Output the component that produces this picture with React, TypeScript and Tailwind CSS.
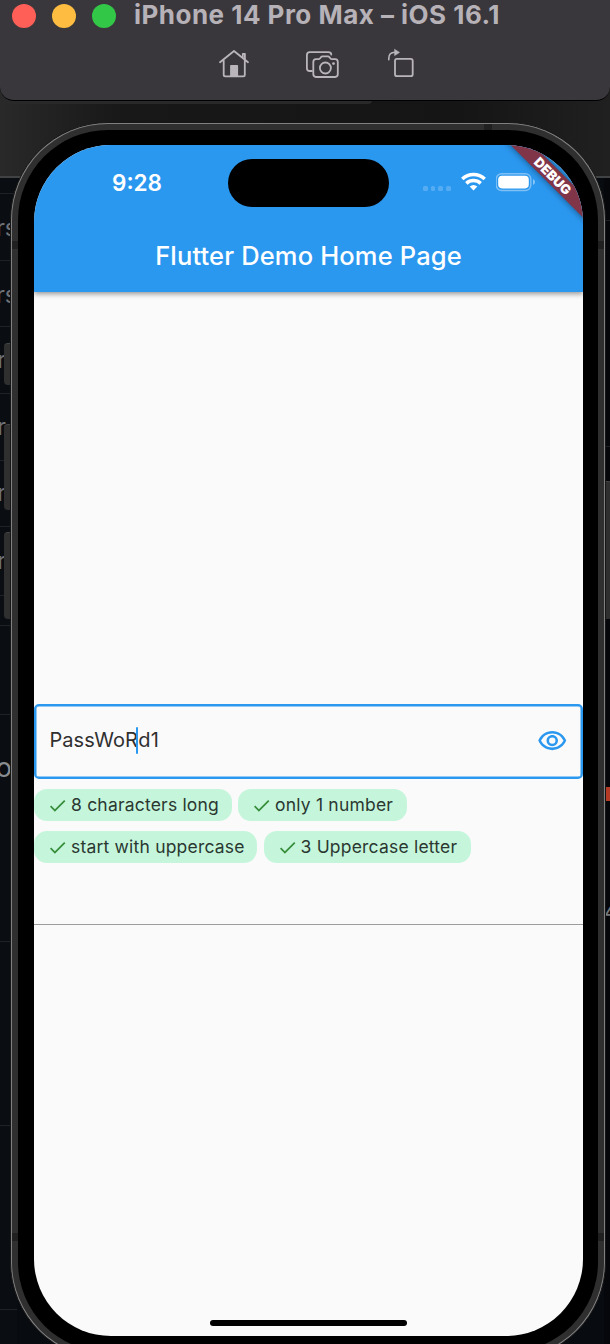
import type { ReactNode } from "react";
import { MdCheck, MdOutlineVisibility } from "react-icons/md";

function TitleBar() {
  return (
    <header className="relative h-[101px] w-full rounded-b-[14px] border-b border-black bg-[#3a373c]">
      <div className="flex h-8 items-center pl-3">
        <div className="flex gap-4">
          <span className="size-6 rounded-full bg-[#ff5f57]" />
          <span className="size-6 rounded-full bg-[#febc40]" />
          <span className="size-6 rounded-full bg-[#33c748]" />
        </div>
        <h1 className="-mt-[2px] ml-[18px] whitespace-nowrap text-[26px] font-bold leading-8 tracking-[0.48px] text-[#b6b2b8]">iPhone 14 Pro Max – iOS 16.1</h1>
      </div>
      <div className="flex pl-[218px] pt-4">
        <svg className="h-8 w-8" viewBox="218 48 32 32" fill="none" stroke="#b9b5bb" strokeWidth="1.8" strokeLinejoin="round" strokeLinecap="round">
          <path d="M220 62.3 234 51l14 11.3M223.7 60.5v14.2q0 1.6 1.6 1.6h17.9q1.6 0 1.6-1.6V60.5" />
          <path d="M242.8 57v-3.2h2.1V59" />
          <path d="M231 65.8h6.2v10h-6.2z" fill="#b9b5bb" />
        </svg>
        <svg className="ml-[54px] h-8 w-9" viewBox="304 48 36 32" fill="none" stroke="#b9b5bb" strokeWidth="1.8" strokeLinejoin="round" strokeLinecap="round">
          <path d="M312 71h-2.3q-2.8 0-2.8-2.8V55q0-2.9 2.9-2.9h18.6q2.7 0 2.9 2.5" />
          <path d="M316 59.2h2.6q.8 0 1.3-.7l1-1.3q.6-.8 1.6-.8h5.4q1 0 1.6.8l1 1.3q.5.7 1.3.7h3.4q2.6 0 2.6 2.9v12q0 2.9-2.6 2.9H316q-2.7 0-2.7-2.9v-12q0-2.9 2.7-2.9z" />
          <circle cx="325.4" cy="68" r="5.5" />
          <circle cx="333.5" cy="63.6" r="1.4" fill="#b9b5bb" stroke="none" />
        </svg>
        <svg className="ml-[46px] h-8 w-8" viewBox="386 48 32 32" fill="none" stroke="#b9b5bb" strokeWidth="1.8" strokeLinejoin="round" strokeLinecap="round">
          <rect x="395" y="58.9" width="17.7" height="17.3" rx="2" />
          <path d="M388.8 59.7v-1.5q0-5.7 6.2-5.9" strokeWidth="1.6" />
          <path d="m394.8 49.4 4.7 3-4.7 3z" fill="#b9b5bb" strokeWidth=".6" />
        </svg>
      </div>
    </header>
  );
}

function Row({ className, children }: { className: string; children?: ReactNode }) {
  return (
    <div className={`flex shrink-0 items-center justify-end border-b border-[#1e2227] text-[23px] leading-none text-[#6e7276] ${className}`}>
      {children}
    </div>
  );
}

function Backdrop() {
  return (
    <div className="absolute inset-0 flex flex-col overflow-hidden bg-[#080b10] font-[Inter,sans-serif]">
      <div className="h-[178px] shrink-0 border-b-2 border-[#404244] bg-[linear-gradient(90deg,#292929,#181818_20%,#151515_75%,#202020)] pt-[100px]">
        <div className="h-1 w-[372px] rounded-br-lg bg-[#29292a]" />
      </div>
      <div className="flex flex-1 justify-between">
        <div className="flex w-[17px] flex-col bg-[#0a0d12]">
          <Row className="h-[16px]" />
          <Row className="h-[67px] pt-[3px]">rs</Row>
          <Row className="h-[66px] pt-[3px]">rs</Row>
          <Row className="h-[67px] pr-[11px]">r</Row>
          <Row className="h-[67px] pr-[11px]">r</Row>
          <Row className="h-[66px] pr-[11px]">r</Row>
          <Row className="h-[69px] pr-[11px]">r</Row>
          <Row className="h-[30px]" />
          <Row className="h-[89px]" />
          <div className="flex h-[227px] shrink-0 items-start justify-end border-b border-[#1e2227] pr-[5px] pt-[39px] text-[27px] leading-none text-[#888c90]">o</div>
          <Row className="h-[184px]" />
          <Row className="h-[184px]" />
        </div>
        <div className="flex w-[6px] flex-col bg-[#05070b]">
          <Row className="h-[43px]" />
          <Row className="h-[226px]" />
          <div className="h-[340px]" />
          <div className="h-[14px] bg-[#b53a25]" />
          <div className="mt-[98px] flex h-6 justify-start text-[22px] leading-6 text-[#777a7d]">4</div>
        </div>
      </div>
    </div>
  );
}

function StatusBar() {
  return (
    <div className="flex h-[76px] items-start">
      <span className="ml-[78px] mt-[24px] w-[116px] text-[22.5px] font-semibold leading-7 text-white">9:28</span>
      <div className="mt-[14px] h-12 w-[161px] rounded-full bg-black" />
      <div className="ml-[34px] mt-[41px] flex gap-[3px]">
        <span className="size-[4.7px] rounded-[1.5px] bg-white/20" />
        <span className="size-[4.7px] rounded-[1.5px] bg-white/20" />
        <span className="size-[4.7px] rounded-[1.5px] bg-white/20" />
        <span className="size-[4.7px] rounded-[1.5px] bg-white/20" />
      </div>
      <svg className="ml-[10px] mt-[27px] h-[19px] w-[25px]" viewBox="0 0 25 19" fill="none" stroke="white" strokeWidth="3.5">
        <path d="M1.3 7.1q4.7-4.6 11.2-4.6t11.2 4.6" />
        <path d="M5.3 11.4q3.1-2.8 7.2-2.8t7.2 2.8" />
        <path d="M8.7 14.5q3.8-3.2 7.6 0L12.5 18.4z" fill="white" stroke="none" />
      </svg>
      <svg className="ml-[10px] mt-[27px] h-[20px] w-[40px]" viewBox="0 0 40 20">
        <rect x=".2" y="1.7" width="34.6" height="16.8" rx="5.5" fill="none" stroke="white" strokeOpacity=".4" strokeWidth="1.4" />
        <rect x="2.2" y="3.8" width="30.6" height="12.6" rx="3.8" fill="white" />
        <path d="M37 7q2 1 2 3t-2 3z" fill="white" fillOpacity=".45" />
      </svg>
    </div>
  );
}

function Chip({ children, className }: { children: string; className: string }) {
  return (
    <li className={`flex h-8 items-center rounded-[13px] bg-[#c5f6dc] pl-[13px] ${className}`}>
      <MdCheck className="size-[21px] shrink-0 text-[#388e3c]" />
      <span className="ml-[3px] whitespace-nowrap text-[17.5px] leading-8 tracking-[0.2px] text-[#2b3831]">{children}</span>
    </li>
  );
}

function AppScreen() {
  return (
    <main className="relative flex h-[1191px] w-[549px] flex-col overflow-hidden rounded-[77px] bg-[#fafafa]">
      <div className="h-[147px] shrink-0 bg-[#2b98f0] shadow-[0_2px_5px_rgba(0,0,0,0.4)]">
        <StatusBar />
        <h2 className="pt-[19px] text-center text-[25.5px] font-medium leading-8 tracking-[0.15px] text-white">Flutter Demo Home Page</h2>
      </div>
      <div className="mt-[411.5px] flex h-[75px] shrink-0 items-center justify-between rounded-[5px] border-[2.6px] border-[#2b98f0] pl-[13.5px] pr-[14px] shadow-[inset_0_0_0_0.5px_#2b98f0]">
        <div className="-mt-[2px] flex items-center text-[20px] leading-7 tracking-[0.05px] text-[#303030]">
          <span>PassWoR</span>
          <span className="-ml-[2px] h-[27px] w-[2.5px] rounded-full bg-[#2b98f0]" />
          <span>d1</span>
        </div>
        <MdOutlineVisibility className="size-[30.5px] text-[#2b98f0]" />
      </div>
      <ul className="mt-[10.5px] flex flex-wrap gap-x-[6.5px] gap-y-[10px]">
        <Chip className="w-[197.5px]">8 characters long</Chip>
        <Chip className="mr-20 w-[169px]">only 1 number</Chip>
        <Chip className="w-[223px]">start with uppercase</Chip>
        <Chip className="w-[207px]">3 Uppercase letter</Chip>
      </ul>
      <div className="mt-[60.5px] h-[1.5px] shrink-0 bg-[#9c9c9c]" />
      <div className="mb-[10px] mt-auto h-[6.5px] w-[197px] shrink-0 self-center rounded-full bg-black" />
      <div className="absolute left-[458.5px] top-[22.5px] flex h-[15.5px] w-[120px] rotate-45 items-center justify-center bg-[#803648] pt-px shadow-[0_0_7px_rgba(0,0,0,0.5)]">
        <span className="text-[13.3px] font-black leading-none text-white">DEBUG</span>
      </div>
    </main>
  );
}

function Phone() {
  return (
    <section className="absolute left-[10px] top-[122px] h-[1238px] w-[596px] rounded-[98px] border border-[#161616] bg-[#808080] p-[1px]">
      <div className="h-full w-full rounded-[96px] bg-[#2f2f2f] p-[6px]">
        <div className="h-full w-full rounded-[90px] bg-black pl-4 pt-[15px]">
          <AppScreen />
        </div>
      </div>
      <span className="absolute left-[473px] top-px h-[6px] w-2 bg-[#202020]" />
      <span className="absolute left-px top-[118px] h-2 w-[6px] bg-[#202020]" />
      <span className="absolute right-px top-[118px] h-2 w-[6px] bg-[#202020]" />
      <span className="absolute left-px top-[1110px] h-2 w-[6px] bg-[#202020]" />
      <span className="absolute right-px top-[1110px] h-2 w-[6px] bg-[#202020]" />
      <span className="absolute -left-[7px] top-[220px] h-[42px] w-[6px] rounded-l-sm border-t border-[#444] bg-[#2f2f2f]" />
      <span className="absolute -left-[7px] top-[301px] h-[86px] w-[6px] rounded-l-sm border-t border-[#444] bg-[#2f2f2f]" />
      <span className="absolute -left-[7px] top-[409px] h-[87px] w-[6px] rounded-l-sm border-t border-[#444] bg-[#2f2f2f]" />
      <span className="absolute -right-[7px] top-[358px] h-[138px] w-[6px] rounded-r-sm border-t border-[#444] bg-[#2f2f2f]" />
    </section>
  );
}

export default function App() {
  return (
    <div className="relative h-[1344px] w-[610px] overflow-hidden font-[Inter,sans-serif]">
      <Backdrop />
      <TitleBar />
      <Phone />
    </div>
  );
}
